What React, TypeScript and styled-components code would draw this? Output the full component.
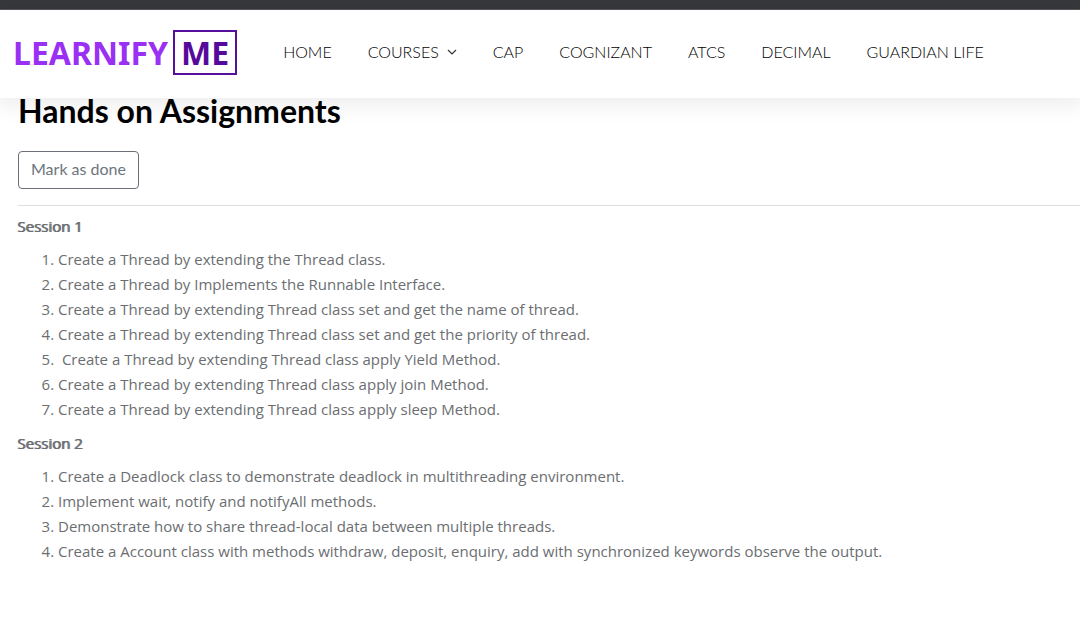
import React from "react";
import styled, { createGlobalStyle } from "styled-components";

const Global = createGlobalStyle`
  * { box-sizing: border-box; }
  body {
    margin: 0;
    background: #fff;
    color: #6b6e71;
    font: 15px/25px "Open Sans", sans-serif;
  }
`;

const TopStrip = styled.div`
  height: 10px;
  background: #37383c;
  border-bottom: 1px solid #55565a;
`;

const Header = styled.header`
  display: flex;
  align-items: center;
  height: 88px;
  padding: 0 13px;
  gap: 46px;
  background: #fff;
  box-shadow: 0 4px 20px 4px rgba(0, 0, 0, 0.07);
`;

const Logo = styled.a`
  display: flex;
  flex: none;
  align-items: center;
  gap: 5px;
  margin-top: -3px;
  color: #9b30f5;
  font: 700 32px/40px "Noto Sans", sans-serif;
  text-decoration: none;
`;

const LogoBox = styled.span`
  height: 45px;
  padding: 0 6px;
  border: 2px solid #56109c;
  color: #560a9c;
  line-height: 42px;
`;

const Nav = styled.nav`
  display: flex;
  align-items: center;
  gap: 36px;
  margin-top: -4px;
`;

const NavLink = styled.a`
  display: flex;
  align-items: center;
  gap: 8px;
  color: #000;
  font: 300 16px/24px Lato, sans-serif;
  text-decoration: none;
  white-space: nowrap;
`;

const Main = styled.main`
  padding: 0 0 20px 18px;
`;

const Title = styled.h1`
  margin: 0;
  padding-bottom: 27px;
  color: #000;
  font: 700 32px/26px Lato, sans-serif;
`;

const DoneButton = styled.button`
  display: block;
  height: 38px;
  padding: 0 12px 2px;
  border: 1px solid #6a6f78;
  border-radius: 4px;
  background: #fff;
  color: #6c757d;
  font: 400 16px/24px Lato, sans-serif;
`;

const Rule = styled.hr`
  margin: 16px 0 8px;
  border: 0;
  border-top: 1px solid #dedede;
`;

const SessionTitle = styled.h2`
  margin: 0 0 0 -1px;
  font: 400 15px/24px "Open Sans", sans-serif;
  text-shadow: 1px 0 currentColor;
`;

const Tasks = styled.ol`
  margin: 9px 0;
  padding: 0 0 0 40px;
`;

const links = ["HOME", "COURSES", "CAP", "COGNIZANT", "ATCS", "DECIMAL", "GUARDIAN LIFE"];

const sessions = [
  {
    title: "Session 1",
    tasks: [
      "Create a Thread by extending the Thread class.",
      "Create a Thread by Implements the Runnable Interface.",
      "Create a Thread by extending Thread class set and get the name of thread.",
      "Create a Thread by extending Thread class set and get the priority of thread.",
      "\u00a0Create a Thread by extending Thread class apply Yield Method.",
      "Create a Thread by extending Thread class apply join Method.",
      "Create a Thread by extending Thread class apply sleep Method.",
    ],
  },
  {
    title: "Session 2",
    tasks: [
      "Create a Deadlock class to demonstrate deadlock in multithreading environment.",
      "Implement wait, notify and notifyAll methods.",
      "Demonstrate how to share thread-local data between multiple threads.",
      "Create a Account class with methods withdraw, deposit, enquiry, add with synchronized keywords observe the output.",
    ],
  },
];

const Chevron = () => (
  <svg width="10" height="6" viewBox="0 0 10 6" fill="none" stroke="#333" strokeWidth="1.2" aria-hidden="true">
    <path d="M1 1l4 4 4-4" />
  </svg>
);

export default function App() {
  return (
    <>
      <Global />
      <TopStrip />
      <Header>
        <Logo href="#">
          <span>LEARNIFY</span>
          <LogoBox>ME</LogoBox>
        </Logo>
        <Nav>
          {links.map((label) => (
            <NavLink href="#" key={label}>
              {label}
              {label === "COURSES" && <Chevron />}
            </NavLink>
          ))}
        </Nav>
      </Header>
      <Main>
        <Title>Hands on Assignments</Title>
        <DoneButton type="button">Mark as done</DoneButton>
        <Rule />
        {sessions.map(({ title, tasks }) => (
          <section key={title}>
            <SessionTitle>{title}</SessionTitle>
            <Tasks>
              {tasks.map((task) => (
                <li key={task}>{task}</li>
              ))}
            </Tasks>
          </section>
        ))}
      </Main>
    </>
  );
}
